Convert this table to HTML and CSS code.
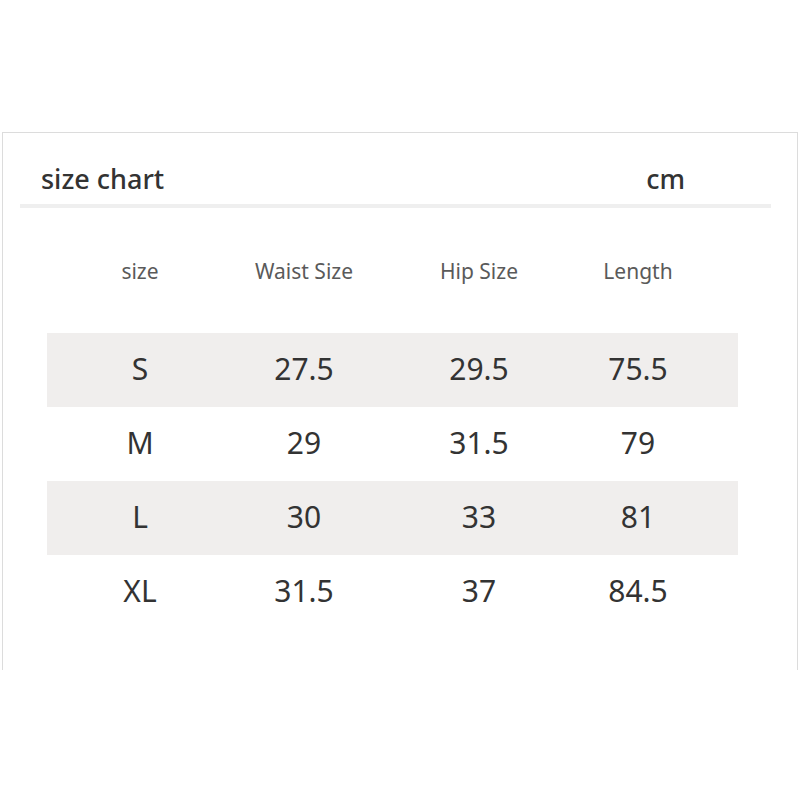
FILE: index.html
```html
<!DOCTYPE html>
<html>
<head>
<meta charset="utf-8">
<link rel="stylesheet" href="styles.css">
</head>
<body>
<div class="frame">
  <div class="head">
    <span class="title">size chart</span>
    <span class="unit">cm</span>
  </div>
  <div class="rule"></div>
  <div class="row cols">
    <span>size</span><span>Waist Size</span><span>Hip Size</span><span>Length</span>
  </div>
  <div class="table">
    <div class="row data shade"><span>S</span><span>27.5</span><span>29.5</span><span>75.5</span></div>
    <div class="row data"><span>M</span><span>29</span><span>31.5</span><span>79</span></div>
    <div class="row data shade"><span>L</span><span>30</span><span>33</span><span>81</span></div>
    <div class="row data"><span>XL</span><span>31.5</span><span>37</span><span>84.5</span></div>
  </div>
</div>
</body>
</html>
```

FILE: styles.css
```css
html, body {
  margin: 0;
  padding: 0;
  background: #ffffff;
}
body {
  font-family: "Noto Sans", "Open Sans", sans-serif;
  color: #333333;
}
.frame {
  margin: 132px 0 0 2px;
  width: 794px;
  height: 537px;
  border: 1px solid #dcdcdc;
  border-bottom: none;
}
.head {
  display: flex;
  justify-content: space-between;
  align-items: center;
  padding: 27px 112px 0 38px;
  height: 36px;
  font-size: 27px;
  font-weight: 500;
  color: #333;
}
.rule {
  margin: 8px 0 0 17px;
  width: 751px;
  height: 4px;
  background: #efefef;
}
.row {
  display: grid;
  grid-template-columns: 186px 142px 208px 110px 1fr;
  align-items: center;
  justify-items: center;
}
.cols {
  margin-left: 44px;
  width: 691px;
  height: 125px;
  font-size: 21px;
  color: #5a5a5a;
}
.table {
  margin-left: 44px;
  width: 691px;
}
.data {
  height: 74px;
  font-size: 30px;
  line-height: 36px;
  padding-bottom: 3px;
  box-sizing: border-box;
  color: #333;
}
.shade {
  background: #f0eeed;
}
```
